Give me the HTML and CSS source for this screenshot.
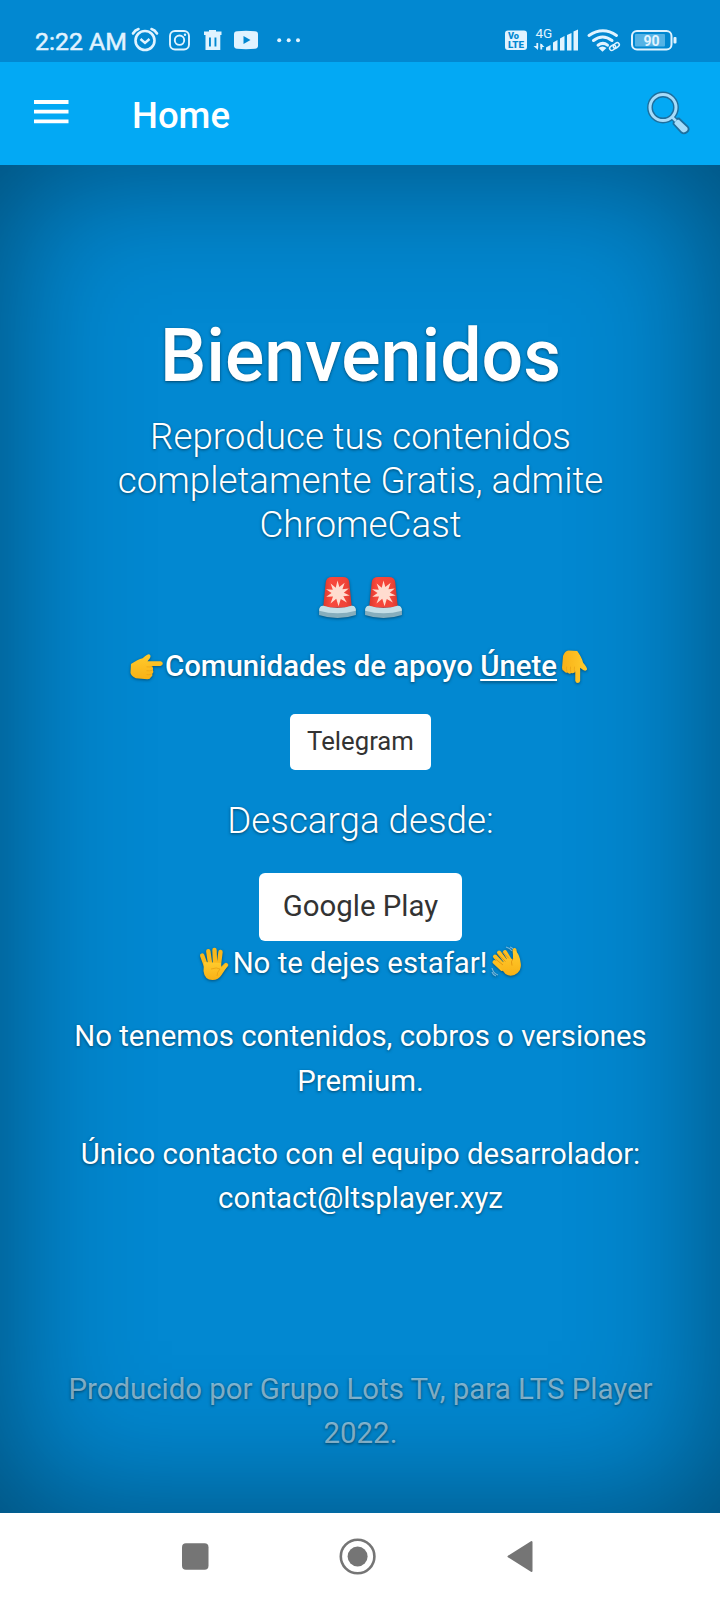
FILE: index.html
```html
<!DOCTYPE html>
<html lang="es">
<head>
<meta charset="utf-8">
<title>Home</title>
<link rel="stylesheet" href="styles.css">
</head>
<body>
<div class="status">
  <span class="clock">2:22 AM</span>
  <svg class="status-left" width="172" height="30" viewBox="130 24 172 30" fill="none" stroke="#e0f3ff">
    <circle cx="145" cy="40.500" r="9.500" stroke-width="2.600"/>
    <path d="M140.500 39l4.500 4 4.500-4" stroke-width="2.400"/>
    <path d="M133 33.500q2-3.500 5.500-4.500M157 33.500q-2-3.500-5.500-4.500" stroke-width="2.600" stroke-linecap="round"/>
    <rect x="170" y="31" width="19" height="18.500" rx="5" stroke-width="1.900"/>
    <circle cx="179.500" cy="40.200" r="4.700" stroke-width="1.900"/>
    <circle cx="185" cy="34.800" r="1.200" fill="#e0f3ff" stroke="none"/>
    <g fill="#e0f3ff" stroke="none">
      <path d="M204 31.500h5v-1.500h7v1.500h5.500v3.500h-17.500zM205.500 35h14.800v15h-14.800zM209 37.500v9h1.900v-9zM214.500 37.500v9h1.900v-9z" fill-rule="evenodd"/>
      <path d="M237 31.300q9-1 18 0 3 .2 3 3v11.500q0 2.600-3 3-9 .8-18 0-3-.4-3-3v-11.500q0-2.800 3-3zM243.500 36v8l7-4z" fill-rule="evenodd"/>
      <circle cx="279.200" cy="40.200" r="2"/><circle cx="288.700" cy="40.200" r="2"/><circle cx="298" cy="40.200" r="2"/>
    </g>
  </svg>
  <svg class="status-right" width="176" height="30" viewBox="502 24 176 30" fill="#e0f3ff">
    <rect x="505" y="30.500" width="22" height="19.500" rx="3"/>
    <g class="volte"><text x="508" y="39.200" textLength="11" lengthAdjust="spacingAndGlyphs">Vo</text><text x="508" y="47.800" textLength="16" lengthAdjust="spacingAndGlyphs">LTE</text></g>
    <text class="net" x="535.500" y="38">4G</text>
    <path d="M537.300 43v5M541.300 44v5.500" stroke="#e0f3ff" stroke-width="1.800"/>
    <path d="M533.500 46h4.500v4zM540.500 43.300v3.700h4z"/>
    <path d="M546 50.500v-3l4.500-2.500v5.500zM553 50.500v-8l4.500-2.500v10.500zM560 50.500V38.500l4.500-2.500v14.500zM567 50.500V35l4.500-2v17.500zM573.500 50.500V31.500l4.500-2v21z"/>
    <g fill="none" stroke="#e0f3ff" stroke-linecap="round" stroke-width="3">
      <path d="M589 35.500q14-9.500 27.500 0M593.500 40.500q9-7 18.500 0M598 45.200q5-3.600 9.500 0"/>
    </g>
    <path d="M598.500 48q4-3 8 0l-4 3.800z"/>
    <g fill="none" stroke="#e0f3ff" stroke-width="1.500"><rect x="609.500" y="46" width="6.500" height="4.200" rx="2.100" transform="rotate(-38 612 48)"/><rect x="613" y="43.500" width="6.500" height="4.200" rx="2.100" transform="rotate(-38 616 45.500)"/></g>
    <rect x="632" y="31" width="39.500" height="18.500" rx="5" fill="none" stroke="#e0f3ff" stroke-width="2"/>
    <rect x="635" y="34" width="30" height="12.500" rx="1" fill="#55b3e5"/>
    <rect x="673.500" y="37" width="3" height="6.500" rx="1"/>
    <text class="batt" x="651.500" y="45.600" text-anchor="middle">90</text>
  </svg>
</div>
<header class="appbar">
  <svg class="menu" width="35" height="24" viewBox="0 0 35 24"><path d="M0 2h34.500M0 11.700h34.500M0 21.400h34.500" stroke="#fff" stroke-width="3.800"/></svg>
  <span class="title">Home</span>
  <svg class="search" width="44" height="44" viewBox="646 91 44 44">
    <path d="M674 119l5-.5 8.500 8q2.500 3-.5 5.500t-5.500.5l-8-8.500z" fill="#a6dcfa" stroke="#1d6f9e" stroke-width="1.800"/>
    <path d="M672 117l4 4" stroke="#1d6f9e" stroke-width="5"/>
    <circle cx="663" cy="107.500" r="13" fill="none" stroke="#1d6f9e" stroke-width="5.800"/>
    <circle cx="663" cy="107.500" r="13" fill="none" stroke="#a6dcfa" stroke-width="3"/>
    <path d="M672 117l4 4" stroke="#a6dcfa" stroke-width="2.500"/>
  </svg>
</header>
<svg class="defs" width="0" height="0">
  <defs>
    <linearGradient id="skin" x2="0" y2="1"><stop stop-color="#ffcb2d"/><stop offset="1" stop-color="#f9b116"/></linearGradient>
    <linearGradient id="red" x2="1"><stop stop-color="#d9382c"/><stop offset=".25" stop-color="#f8483c"/><stop offset=".8" stop-color="#f04438"/><stop offset="1" stop-color="#d23a30"/></linearGradient>
    <symbol id="siren" viewBox="0 0 38 42">
      <path d="M5 31L7.500 6Q8 1 14 1h10q6 0 6.500 5L33 31z" fill="url(#red)"/>
      <path d="M19 4.500l1.800 6.300 5.200-4.300-2.200 6.400 6.200-.8-4.800 4.200 5.800 2.700-6.300.8 3.400 6.200-5.900-3.600L20 29.500l-2.200-7.300-5.600 4.600 2.400-6.800-6.600.2 5.200-3.700-5.400-3.600 6.600.5-2.100-6 5 4.100z" fill="#ffdccf"/>
      <path d="M1 35q0-6 4-6 14 5 28 0 4 0 4 6v3q-18 6-36 0z" fill="#86aebd"/>
      <path d="M1 34q0-5 4-5 14 4.500 28 0 4 0 4 5-18 5-36 0z" fill="#c4dfe7"/>
    </symbol>
    <symbol id="point" viewBox="0 0 34 28">
      <path d="M1 11Q8 6 13 5q5-4.500 7-4 2 1 .5 4L18 8h13.500q2.300.5 2.300 2.500T31.500 13H22q2.500 1.500 1.500 4 1.500 2.200-.5 4 .8 2.200-1.500 3.500Q21 26.500 18 26.500L6 25.500Q1 23.500.5 20z" fill="url(#skin)"/>
      <path d="M23 13.500q-3 .8-6 .3M23 17.500q-3 .8-6 .3M22 21.500q-3 .8-5 .3" fill="none" stroke="#eba317" stroke-width=".8"/>
    </symbol>
    <symbol id="palm" viewBox="0 0 30 34">
      <g fill="none" stroke="#fbb81b" stroke-linecap="round" stroke-width="4.400"><path d="M7 19L3.200 8.500M11 16L9.300 4.200M16 16l-.5-13M20 17l1.500-12"/><path d="M21 24l6-6"/></g>
      <path d="M5 15l17 1 .5 5 4.500-4 1.500 2-6 9q-3 5-9 5-8 0-9-9z" fill="url(#skin)"/>
      <path d="M12 22q6-2 9 0-3 3-3 7" fill="none" stroke="#e99f14" stroke-width=".8"/>
    </symbol>
    <symbol id="wave" viewBox="0 0 31 33">
      <g fill="none" stroke="#fdbe20" stroke-linecap="round" stroke-width="4"><path d="M11 23L3.500 16M13 20L4 10.500M16 17L8 6.500M20 16l-6-10"/><path d="M25 18L23.500 4"/></g>
      <path d="M8 20L18 11l4 3L22 5h3q4 5 4.500 11 1.500 7-3 11-6 5-12 1z" fill="url(#skin)"/>
      <path d="M12 19L4.500 13M14.500 15.500L6.500 8M18 12.500L11.500 6M22 12.500q-2.500 3-1 7" fill="none" stroke="#df8d0b" stroke-width=".8"/>
      <path d="M15 1q4 1 6 4M19 1q2 .5 3 2M1 22q1 5 6 7M1 26q1 3 4 4" fill="none" stroke="#73b4d8" stroke-width="1.200"/>
    </symbol>
  </defs>
</svg>
<main class="cover">
  <h1>Bienvenidos</h1>
  <p class="lead">Reproduce tus contenidos completamente Gratis, admite ChromeCast</p>
  <div class="sirens"><svg class="emoji siren"><use href="#siren"/></svg><svg class="emoji siren"><use href="#siren"/></svg></div>
  <p class="community"><svg class="emoji point"><use href="#point"/></svg>Comunidades de apoyo <u>Únete</u><svg class="emoji down" viewBox="0 0 27 34"><g transform="translate(27 0) rotate(90) scale(.98 .98)"><use href="#point" width="34" height="28"/></g></svg></p>
  <a class="btn small">Telegram</a>
  <p class="lead download">Descarga desde:</p>
  <a class="btn">Google Play</a>
  <p class="warning"><svg class="emoji palm"><use href="#palm"/></svg>No te dejes estafar!<svg class="emoji wave"><use href="#wave"/></svg></p>
  <p>No tenemos contenidos, cobros o versiones Premium.</p>
  <p>Único contacto con el equipo desarrolador: contact@ltsplayer.xyz</p>
  <footer>Producido por Grupo Lots Tv, para LTS Player 2022.</footer>
</main>
<nav class="sysnav">
  <svg width="720" height="87" viewBox="0 1513 720 87" fill="#757575">
    <rect x="182" y="1543.300" width="26.500" height="26.500" rx="4"/>
    <circle cx="357.600" cy="1556.500" r="16.800" fill="none" stroke="#757575" stroke-width="2.600"/>
    <circle cx="357.600" cy="1556.500" r="10"/>
    <path d="M508.500 1556.500L531.500 1542v29z" stroke="#757575" stroke-width="2" stroke-linejoin="round"/>
  </svg>
</nav>
</body>
</html>
```
FILE: styles.css
```css
html { font-size: 29.39px; }
* { box-sizing: border-box; }
body { margin: 0; width: 720px; height: 1600px; display: flex; flex-direction: column; overflow: hidden; font-family: Roboto, sans-serif; background: #fff; }
p, h1 { margin: 0; }
.defs { position: absolute; }
.status { height: 62px; flex: none; display: flex; align-items: flex-start; padding: 24px 0 0 35px; background: #0288d1; color: #e0f3ff; }
.clock { width: 95px; font-size: 24.800px; line-height: 35px; white-space: nowrap; -webkit-text-stroke: .5px #e0f3ff; }
.status-right { margin-left: 200px; }
.volte { font-size: 9px; font-weight: 900; fill: #0288d1; }
.net { font-size: 13.500px; }
.batt { font-size: 14px; font-weight: 700; }
.appbar { height: 102.700px; flex: none; display: flex; align-items: flex-start; background: #03a9f4; color: #fff; }
.menu { margin: 38px 0 0 34px; }
.title { margin: 33px 0 0 63px; font-size: 36.500px; font-weight: 500; line-height: 42px; }
.search { margin: 29px 30px 0 auto; }
.cover { height: 1348.300px; flex: none; padding: 147.600px 58.300px 0 59.300px; display: flex; flex-direction: column; align-items: center; text-align: center; background: #0288d1; color: #fff; line-height: 1.5; box-shadow: inset 0 0 4.900rem rgba(0, 0, 0, .46); text-shadow: 0 .05rem .1rem rgba(0, 0, 0, .5); }
h1 { font-size: 2.5rem; font-weight: 500; line-height: 1.2; margin-bottom: .5rem; }
.lead { font-size: 1.25rem; font-weight: 300; line-height: 1.2; }
.emoji { filter: drop-shadow(0 1.500px 1.500px rgba(0, 0, 0, .4)); }
.sirens { height: 96.800px; padding-top: 28.500px; display: flex; gap: 7px; }
.siren { width: 39px; height: 43px; }
.community { font-weight: 500; display: flex; align-items: flex-start; white-space: pre; height: 69.700px; }
.community u { text-decoration-thickness: 2px; text-underline-offset: 3px; }
.point { width: 33px; height: 28px; margin: 9px 2px 0 0; }
.down { width: 27px; height: 34px; margin: 6px 3px 0 4px; }
.btn { flex: none; background: #fff; color: #333; border-radius: 6px; height: 68.500px; line-height: 67px; padding: 0 23.600px; text-shadow: none; }
.btn.small { font-size: .875rem; height: 56px; line-height: 54px; padding: 0 16.700px; border-radius: 5px; }
.download { margin: 28.700px 0 29.900px; }
.warning { display: flex; align-items: flex-start; white-space: nowrap; }
.palm { width: 30px; height: 34px; margin: 6px 4px 0 0; }
.wave { width: 31px; height: 33px; margin: 5px 0 0 4px; }
.cover > .warning, .cover > .warning + p { margin-bottom: 1rem; }
.cover > footer { margin: 146.500px -10px 0; color: rgba(255, 255, 255, .5); }
.sysnav { flex: 1; background: #fff; }
.sysnav svg { display: block; }
```
